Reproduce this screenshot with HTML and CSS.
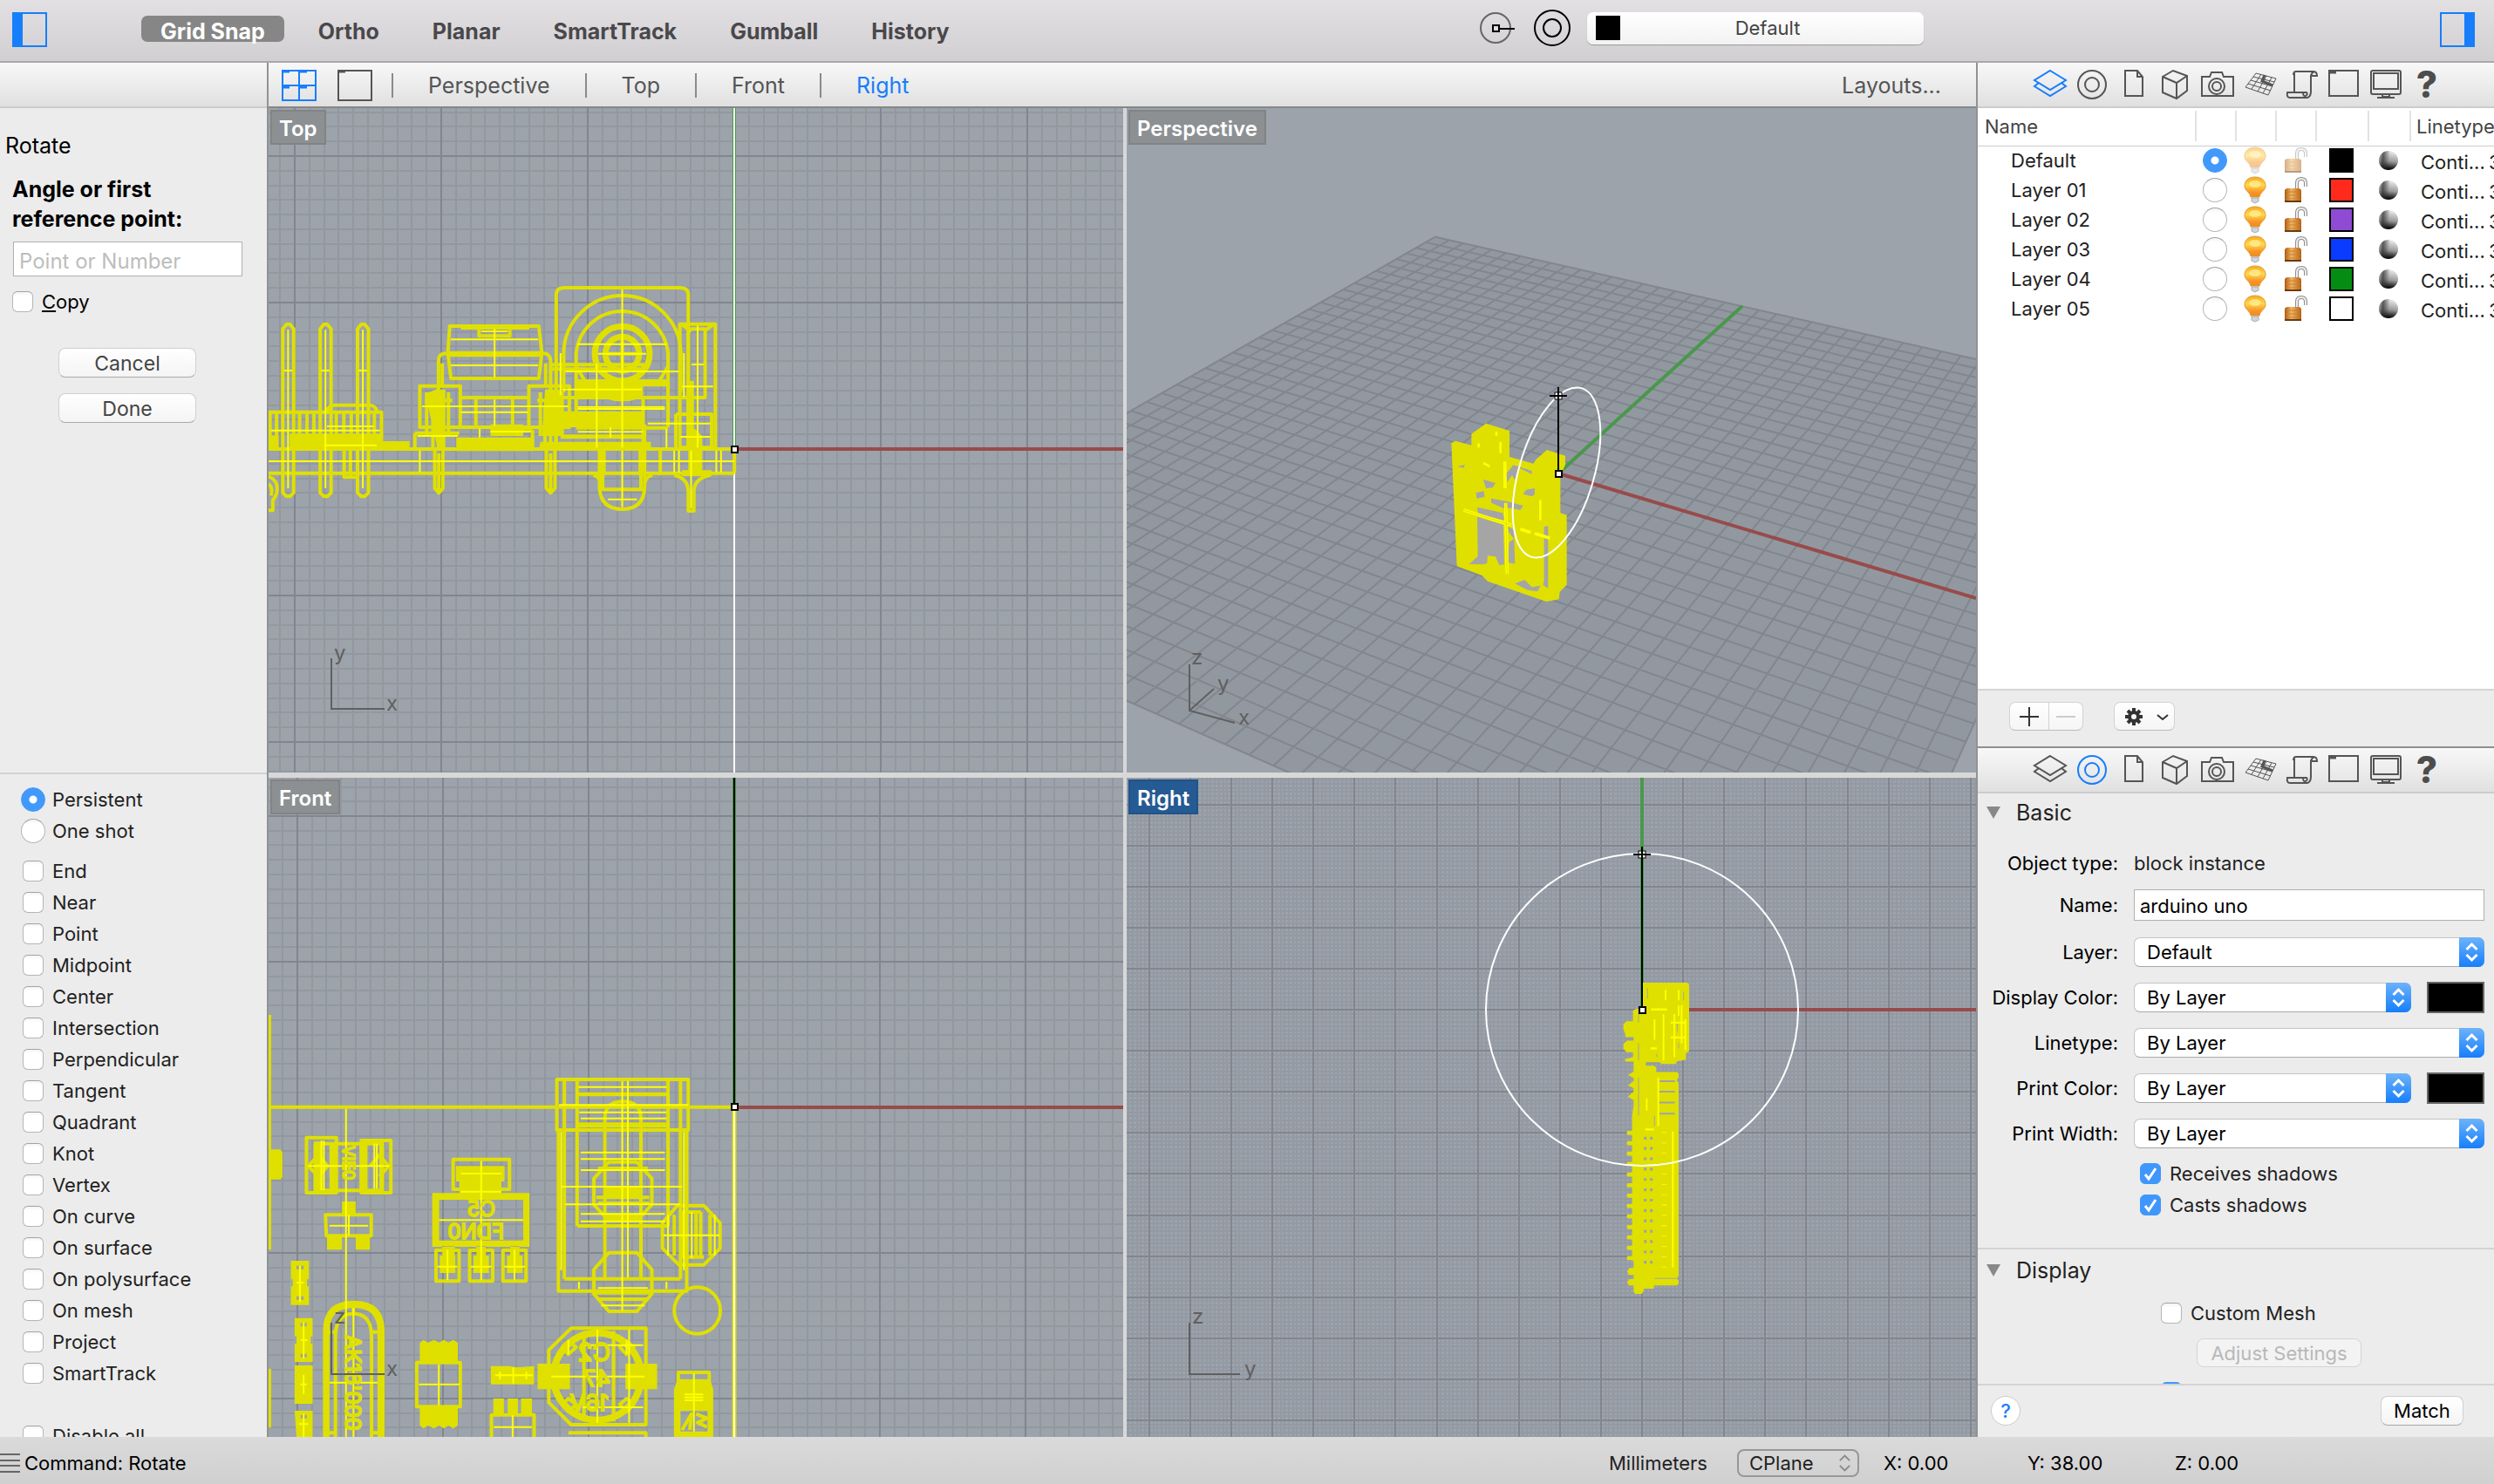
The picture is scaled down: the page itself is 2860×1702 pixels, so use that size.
FILE: index.html
```html
<!DOCTYPE html>
<html lang="en">
<head>
<meta charset="utf-8">
<title>Rotate</title>
<link rel="stylesheet" href="styles.css">
</head>
<body>
<svg class="defs" aria-hidden="true">
  <defs>
    <linearGradient id="bulbFill" x1="0" y1="0" x2="0" y2="1"><stop offset="0" stop-color="#f7a823"/><stop offset=".4" stop-color="#ffd84a"/><stop offset=".75" stop-color="#f8952a"/><stop offset="1" stop-color="#ee8a20"/></linearGradient>
    <linearGradient id="lockFill" x1="0" y1="0" x2="1" y2="0"><stop offset="0" stop-color="#a8550c"/><stop offset=".4" stop-color="#f2b566"/><stop offset="1" stop-color="#b4600f"/></linearGradient>
    <linearGradient id="ballFill" x1=".7" y1="0" x2=".55" y2="1"><stop offset="0" stop-color="#f0f0f0"/><stop offset=".55" stop-color="#9a9a9a"/><stop offset=".88" stop-color="#222"/><stop offset="1" stop-color="#000"/></linearGradient>
    <linearGradient id="ballEdge" x1="0" y1=".4" x2="1" y2=".5"><stop offset="0" stop-color="#aaa" stop-opacity=".7"/><stop offset=".2" stop-color="#333" stop-opacity=".75"/><stop offset=".55" stop-color="#333" stop-opacity="0"/></linearGradient>
  </defs>
  <symbol id="i-layers" viewBox="0 0 48 50"><path d="M24 9 42 20 24 31 6 20ZM11 23 6 27 24 38 42 27 37 23"/></symbol>
  <symbol id="i-torus" viewBox="0 0 48 50"><circle cx="24" cy="25" r="16"/><circle cx="24" cy="25" r="8"/></symbol>
  <symbol id="i-page" viewBox="0 0 48 50"><path d="M14 9H28L34 16V38H14ZM28 9V16H34"/></symbol>
  <symbol id="i-cube" viewBox="0 0 48 50"><path d="M9 16 21 9 37 15V32L25 41 9 34ZM9 16 25 23 37 15M25 23V41"/></symbol>
  <symbol id="i-camera" viewBox="0 0 48 50"><path d="M6 16H15L17 11H29L31 16H42V38H6Z"/><circle cx="23" cy="27" r="9"/><circle cx="23" cy="27" r="5"/></symbol>
  <symbol id="i-plane" viewBox="0 0 48 50"><path class="fine" d="M20 12 43 18 34 37 8 28ZM26 13 15 30M32 15 22 33M38 17 28 35M17 16 41 22M14 20 39 27M11 24 37 32"/><path class="bold" d="M30 14 27 21 39 26"/></symbol>
  <symbol id="i-script" viewBox="0 0 48 50"><path d="M16 11V34H8Q7 40 11 40H31Q35 39 35 33V15H42Q42 10 38 10H18Q15 10 15 14M35 15Q36 11 39 10M26 34H30Q32 36 29 38Q26 39 26 34ZM16 34H26"/></symbol>
  <symbol id="i-window" viewBox="0 0 48 50"><rect x="8" y="9" width="33" height="29"/><path class="bold" d="M9 11H16"/></symbol>
  <symbol id="i-monitor" viewBox="0 0 48 50"><rect x="8" y="9" width="34" height="27" rx="2"/><rect x="11" y="12" width="28" height="18"/><path d="M21 36V39H29V36M15 40H35"/></symbol>
  <symbol id="i-bulb" viewBox="0 0 28 32"><path d="M14 1C7 1 2 5 2 11C2 17 8 18 9 24H19C20 18 26 17 26 11C26 5 21 1 14 1Z" fill="url(#bulbFill)" stroke="#e39b2c"/><ellipse cx="14" cy="9" rx="7" ry="4" fill="#fff19a" opacity=".7"/><path d="M10 25H18V29L14 31 10 29Z" fill="#cfd6dd" stroke="#a5adb5"/></symbol>
  <symbol id="i-lock" viewBox="0 0 30 32"><path d="M17 15V8Q17 3 22 3Q27 3 27 8V12" fill="none" stroke="#8e8e8e" stroke-width="4"/><path d="M17 15V8Q17 3 22 3Q27 3 27 8V12" fill="none" stroke="#eee" stroke-width="2"/><path d="M3 17Q3 14 7 14H18Q22 14 22 17V29H3Z" fill="url(#lockFill)"/><path d="M4 18H21M4 22H21M4 26H21" stroke="#c9822e" stroke-width="1"/><path d="M3 29H22" stroke="#6b3b10" stroke-width="2"/></symbol>
  <symbol id="i-ball" viewBox="0 0 24 24"><circle cx="12" cy="12" r="11" fill="url(#ballFill)"/><circle cx="12" cy="12" r="11" fill="url(#ballEdge)"/></symbol>
  <symbol id="i-updown" viewBox="0 0 28 34"><path d="M8 14 14 8 20 14M8 20 14 26 20 20"/></symbol>
</svg>

<div class="app">
  <header class="titlebar">
    <button class="icon-btn" aria-label="Left sidebar"><svg width="40" height="40" viewBox="0 0 40 40"><path d="M1 1H39V39H1Z" fill="none" stroke="#167efb" stroke-width="2"/><path d="M1 1H12V39H1Z" fill="#167efb"/></svg></button>
    <nav class="modes">
      <button class="mode on">Grid Snap</button><button class="mode">Ortho</button><button class="mode">Planar</button><button class="mode">SmartTrack</button><button class="mode">Gumball</button><button class="mode">History</button>
    </nav>
    <div class="current">
      <button class="icon-btn" aria-label="Record history"><svg width="44" height="44" viewBox="0 0 44 44" fill="none"><circle cx="19" cy="22" r="17" stroke="#666" stroke-width="2"/><path d="M21 23H41" stroke="#000" stroke-width="2"/><rect x="16" y="19" width="7" height="7" fill="#ddd" stroke="#000" stroke-width="2"/></svg></button>
      <button class="icon-btn" aria-label="Object properties"><svg width="44" height="44" viewBox="0 0 44 44" fill="none" stroke="#000" stroke-width="2"><circle cx="22" cy="22" r="20"/><circle cx="22" cy="22" r="10"/></svg></button>
      <button class="layer-field"><span class="swatch black"></span><span class="layer-name">Default</span></button>
    </div>
    <button class="icon-btn right-toggle" aria-label="Right sidebar"><svg width="40" height="40" viewBox="0 0 40 40"><path d="M1 1H39V39H1Z" fill="none" stroke="#167efb" stroke-width="2"/><path d="M28 1H39V39H28Z" fill="#167efb"/></svg></button>
  </header>

  <aside class="left">
    <div class="strip"></div>
    <form class="command">
      <h2>Rotate</h2>
      <label class="prompt" for="pt">Angle or first reference point:</label>
      <input class="text" id="pt" type="text" placeholder="Point or Number">
      <label class="check copy"><input type="checkbox"><span><u>C</u>opy</span></label>
      <button type="button" class="push">Cancel</button>
      <button type="button" class="push">Done</button>
    </form>
    <form class="snaps">
      <label class="check"><input type="radio" name="persist" checked>Persistent</label>
      <label class="check gap-after"><input type="radio" name="persist">One shot</label>
      <label class="check"><input type="checkbox">End</label>
      <label class="check"><input type="checkbox">Near</label>
      <label class="check"><input type="checkbox">Point</label>
      <label class="check"><input type="checkbox">Midpoint</label>
      <label class="check"><input type="checkbox">Center</label>
      <label class="check"><input type="checkbox">Intersection</label>
      <label class="check"><input type="checkbox">Perpendicular</label>
      <label class="check"><input type="checkbox">Tangent</label>
      <label class="check"><input type="checkbox">Quadrant</label>
      <label class="check"><input type="checkbox">Knot</label>
      <label class="check"><input type="checkbox">Vertex</label>
      <label class="check"><input type="checkbox">On curve</label>
      <label class="check"><input type="checkbox">On surface</label>
      <label class="check"><input type="checkbox">On polysurface</label>
      <label class="check"><input type="checkbox">On mesh</label>
      <label class="check"><input type="checkbox">Project</label>
      <label class="check last"><input type="checkbox">SmartTrack</label>
      <label class="check"><input type="checkbox">Disable all</label>
    </form>
  </aside>

  <main class="center">
    <nav class="viewtabs">
      <button class="icon-btn" aria-label="Four viewports"><svg width="40" height="36" viewBox="0 0 40 36" fill="none" stroke="#167efb"><path d="M1 1H39V35H1ZM20 1V35M1 18H39" stroke-width="2"/><path d="M1 2H9M20 2H29M1 20H9M20 20H29" stroke-width="3"/></svg></button>
      <button class="icon-btn" aria-label="Single viewport"><svg width="40" height="36" viewBox="0 0 40 36" fill="none" stroke="#555"><path d="M1 1H39V35H1Z" stroke-width="2"/><path d="M1 2H9" stroke-width="3"/></svg></button>
      <ul>
        <li><a href="#persp">Perspective</a></li><li><a href="#top">Top</a></li><li><a href="#front">Front</a></li><li><a class="on" href="#right">Right</a></li>
      </ul>
      <a class="layouts" href="#layouts">Layouts...</a>
    </nav>
    <div class="views">
      <section class="view" id="top">
        <svg viewBox="308 124 980 762" preserveAspectRatio="xMinYMin slice">
          <g class="grid" id="gridTop"></g>
          <path class="ax-y" d="M842 124V515"/><path class="hot" d="M842 124V886"/><path class="ax-x" d="M842 515H1288"/>
          <g class="gizmo"><path d="M380 755V813H441"/><text x="383" y="757">y</text><text x="443" y="815">x</text></g>
          <g class="wire" transform="translate(300 300) scale(.357143 .333333)">
            <g class="t">
              <path d="M22 645H1518M22 728H1518M1518 645V728"/>
              <path d="M68 795V232L80 216H91L103 232V795L91 808H80ZM188 795V232L200 216H211L223 232V795L211 808H200ZM308 795V232L320 216H331L343 232V795L331 808H320Z"/>
              <path d="M22 518H385V640M27 518V645M48 518V600M122 518V600M146 518V600M168 518V600M240 518V600M264 518V600M288 518V600M362 518V600M210 515Q215 494 235 494H345Q365 494 370 515"/>
              <path d="M22 740Q50 750 50 780Q50 805 36 820V856H22M22 765Q38 780 30 805M265 650V742H305M285 650V742"/>
              <path d="M604 222H890L900 315 890 402H608L598 315ZM640 228H860M698 232V256H797V232"/>
              <path d="M568 640V340Q568 316 592 316H905Q925 316 928 340V640M580 430V350M912 430V350"/>
              <path d="M508 428H638V570H508ZM858 428H988V570H858ZM530 450V600M600 450V600M895 450V600M965 450V600M638 468H858M638 570H858M688 470V568M806 470V568M524 478H612M885 478H960M550 500V640M582 500V640M910 500V640M945 500V640"/>
              <path d="M492 590V640M870 580V640M492 590H635M735 575H870"/>
              <path d="M556 650V780L569 796 582 780V650M914 650V780L928 796 942 780V650M569 660V790M928 660V790"/>
              <path d="M946 640V115Q946 90 972 90H1343Q1370 90 1370 115V640"/>
              <path d="M970 450V317A188 200 0 0 1 1346 317V450M1010 405V317A148 159 0 0 1 1305 317V570M1010 360L1040 415M1305 360L1275 415M1010 405V570"/>
              <path d="M930 355H1225V370H930M946 468H1424V232H1370V640M1343 215H1457V640H1343ZM1347 215 1380 240M1453 215 1420 240M1330 525H1445V640M1330 525V640"/>
              <path d="M1010 572H1305M1225 470V640M1230 560V720M1085 645V780Q1090 852 1158 852Q1225 852 1230 780V645M1095 645V780M1218 645V780M1090 784H1225M1065 735Q1088 740 1088 770M1255 735Q1230 740 1230 770M1280 645V735M1325 735Q1368 745 1370 790V858H1388V790Q1390 745 1440 735"/>
            </g>
            <g class="f">
              <path d="M90 592H385V618H475V645H90ZM27 598H55V645H27ZM595 308H903V328H595ZM625 605H870V652H625ZM735 560H840V600H735ZM525 455L565 640H590V440H560ZM910 440H960V600H900ZM1010 405H1305V430H1225V465H1015ZM955 515H1225V570H955ZM895 620H1250V650H890ZM960 595H1225V610H960ZM1085 650H1105V735H1085ZM1210 650H1235V735H1210ZM1370 410H1388V650H1370ZM1385 570L1415 600V735H1370V650ZM1350 718H1445V738H1350Z"/>
              <path d="M1100 470H1215Q1158 492 1100 470Z"/>
            </g>
            <g class="t"><ellipse cx="1158" cy="317" rx="88" ry="94" stroke-width="7"/><ellipse cx="1158" cy="317" rx="54" ry="58" stroke-width="7"/><path d="M1158 260V372M1105 317H1210"/></g>
            <path class="n" d="M85 235V780M205 235V780M325 235V780M72 375H98M192 375H218M312 375H338M22 687H1518M30 581H380M210 567H360M200 632H370M608 268H888M608 357H888M748 232V398M705 240H790M515 498H985M640 518H855M748 475V565M500 600H630M735 585H865M1158 95V640M1015 284H1300M1080 317H1235M975 378H1340M965 440H1220M1015 500H1295M1015 507H1295M1076 350V640M960 315V460M1356 315V465M1400 220V640M1380 354H1420M1350 430H1450M1240 557H1440M1345 603H1440M1015 586H1225M1300 575V640M1158 650V845M1112 818H1205M508 650V725M1325 650V725M1340 650V725M1460 650V725M1475 650V725M1379 650V850M700 575V605M1120 570V605"/>
          </g>
          <rect class="pt" x="839" y="512" width="7" height="7"/>
        </svg>
        <span class="tag">Top</span>
      </section>

      <section class="view" id="persp">
        <svg viewBox="1292 124 974 762" preserveAspectRatio="xMinYMin slice">
          <path id="floor" fill="#9298a0"/><path id="gridPersp" fill="none" stroke="#82868e" stroke-width="2"/>
          <path class="ax-y" d="M1787 543 1998 351"/><path class="ax-x" d="M1787 543 2266 686"/>
          <g class="gizmo"><path d="M1364 762V815L1416 829M1364 815 1392 790"/><text x="1366" y="762">z</text><text x="1396" y="792">y</text><text x="1420" y="831">x</text></g>
          <g transform="translate(1600 400) scale(.333333)">
            <path class="f" d="M193 325 207 317 262 332V293L312 257 393 282V372L475 395 485 380 522 348 585 368V398L568 440V565L590 572V812L566 836 563 862 520 870 318 800 298 780 212 748Z"/>
            <path fill="#a5a5a5" d="M282 578 372 606 375 742 358 745 345 715 318 712 316 738 303 742 254 741 284 715ZM388 612 408 622 412 740 388 735 392 665 408 655 390 630ZM406 400 470 420V432L430 412 420 415 418 440 410 450 402 435 385 460 382 430ZM450 485 480 480V500L470 508 440 500ZM303 450 345 462 335 478 312 480ZM278 495 305 490 308 510 280 515ZM330 515 385 525 440 540 430 555 400 548 372 548 330 530ZM282 545 370 565 375 590 285 570ZM512 612 526 610V825L508 812 512 800ZM215 405 240 398 235 410ZM412 808 445 795 470 820 500 815 490 835 455 830Z"/>
            <path d="M235 555 400 607M430 620 466 632M480 635 532 652M377 388 378 480M380 530 385 775" stroke="#ff0" stroke-width="11" fill="none"/>
            <path d="M235 555 400 607M380 530 385 775" stroke="#d0d000" stroke-width="2" fill="none"/>
            <path d="M348 285V300M362 320V360M303 393 325 405M287 325V340M499 520V590" stroke="#ff0" stroke-width="8" fill="none"/>
          </g>
          <ellipse class="hot" cx="1785" cy="542" rx="101" ry="43" transform="rotate(-73.5 1785 542)"/>
          <path class="ink" d="M1787 543V444M1777 454H1797"/><rect class="pt" x="1784" y="540" width="7" height="7"/><rect class="cur" x="1783" y="450" width="8" height="8"/><path class="ink" d="M1787 444V464M1777 454H1797"/>
        </svg>
        <span class="tag">Perspective</span>
      </section>

      <section class="view" id="front">
        <svg viewBox="308 892 980 756" preserveAspectRatio="xMinYMin slice">
          <g class="grid" id="gridFront"></g>
          <path class="ax-y" d="M842 892V1270"/><path class="ink" d="M842 892V1270"/><path class="ax-x" d="M842 1270H1288"/>
          <path d="M842 1270V1648" stroke="#dfe000" stroke-width="5"/><path class="hot" d="M842 1270V1648"/>
          <g class="wire" transform="translate(300 1160) scale(.357143 .333333)">
            <g class="t">
              <path d="M22 329H1518M25 12V820M25 1230V1432"/>
              <path d="M144 434H240V624H144ZM320 444H415V624H320ZM172 455H388V616H172ZM205 700H352V772H208ZM615 509H796V612H615ZM948 234H1370V408H948ZM972 234V920M1013 234V738M1305 234V738M1345 234V920M953 408V962H1365V408M972 920H1345M1013 738H1305M1102 370V915M1218 370V915"/>
              <path d="M1115 518H1205L1253 575V665L1205 720H1115L1067 665V575ZM1115 830H1205L1253 888V972L1205 1032H1115L1067 972V888ZM1335 668H1420L1472 728V815L1420 872H1340L1287 815V728ZM1102 370Q1102 310 1160 310Q1218 310 1218 370"/>
              <path d="M1080 540H1240M1075 640H1245M1080 660H1245M1080 990H1240M1070 968H1250M1350 690H1410M1345 845H1420M1325 700V840M1350 690V850M1410 690V850M1440 700V840M1365 690V850M1395 690V850"/>
              <ellipse cx="1399" cy="1029" rx="74" ry="80"/>
              <path d="M560 822H634V928H560ZM668 822H742V928H668ZM775 822H849V928H775Z"/>
              <path d="M498 1208H638V1360H498ZM738 1388H875V1470H738ZM994 1090H1234V1422H994L922 1345V1165ZM985 1450H1234V1470M1338 1242H1437V1300H1338ZM1130 1100V1410M1035 1100V1410"/>
              <path d="M237 1464V1120Q237 1040 295 1040Q353 1040 353 1120V1464M210 1450H240M353 1450H390M295 1000V1040M215 1103H237M353 1103H390"/>
            </g>
            <path class="f" fill-rule="evenodd" d="M22 475H60L67 485V570L60 578H22ZM168 448H195V616H168ZM218 455H243V616H218ZM315 455H340V616H315ZM378 450H392V620H378ZM258 654H302V700H258ZM210 772H258V820H210ZM302 772H348V820H302ZM548 625H860V810H548ZM570 648V788H840V648ZM624 532H780V585H770V625H635V585H624ZM572 840H622V900H572ZM680 840H730V900H680ZM788 840H838V900H788ZM600 808H620V840H580V808ZM690 808H720V840H690ZM798 808H828V840H798ZM94 858H152V1010H94ZM106 1055H164V1206H106ZM106 1218H164V1350H106ZM106 1374H164V1464H112ZM197 1464V1100Q197 995 296 995Q395 995 395 1100V1464H372V1100Q372 1020 296 1020Q218 1020 218 1100V1464ZM508 1140L520 1130 535 1140 553 1130 570 1140 585 1130 600 1140 615 1130 630 1140V1205H508ZM508 1362H630V1425L615 1435 600 1425 585 1435 570 1425 553 1435 535 1425 520 1435 508 1425ZM736 1220H792L820 1225 875 1220V1283H736ZM744 1332H778V1385H744ZM790 1332H823V1385H790ZM833 1332H868V1385H833ZM886 1212H990V1300H886ZM1168 1212H1270V1300H1168ZM1324 1300L1336 1265H1440L1450 1300V1470H1324ZM1345 1375V1445H1432V1375ZM1013 278H1305V292H1013ZM1013 382H1305V400H1013ZM1102 600H1218V640H1102ZM1105 695H1215V722H1105Z"/>
            <g class="t"><ellipse cx="1078" cy="1256" rx="140" ry="150" stroke-width="8"/><path d="M150 532L182 495 212 532 182 568ZM348 532L378 495 408 532 378 568M965 1155L985 1135 1010 1155 985 1180ZM1150 1155L1172 1135 1195 1155 1172 1180ZM965 1352L985 1332 1010 1352 985 1378ZM1150 1352L1172 1332 1195 1352 1172 1378ZM1350 1440L1380 1385 1375 1440M1395 1385 1430 1400 1400 1415 1430 1430"/></g>
            <path class="n" d="M271 335V1464M150 532H410M192 445V615M200 445V615M362 455V610M370 455V610M218 737H342M280 700V770M705 515V925M570 718H840M640 558H770M640 620H770M597 820V925M812 820V925M565 878H628M672 878H738M780 878H845M1158 240V1030M1176 240V915M1017 260H1300M955 322H1370M1020 347H1300M1025 368H1300M1025 485H1295M1025 508H1295M1025 546H1295M965 603H1350M975 664H1345M1025 697H1295M1025 722H1295M962 415V890M1356 415V890M1290 770H1470M1381 690V850M1305 700V840M1455 700V840M1080 952H1240M1090 1012H1230M1019 930V955M1300 930V955M569 1215V1355M505 1283H635M745 1430H868M806 1390V1464M930 1256H1230M1078 1095V1415M1180 1095V1415M1030 1148H1225M1030 1362H1225M985 1130V1180M1172 1130V1180M1388 1245V1445M1358 1318H1418M1358 1328H1418M1358 1338H1418M295 1020V1464M218 1277H372M750 1252H870M808 1225V1280M765 1240V1265M850 1240V1265M135 1250V1316M125 1283H145M112 933H135M123 875V1000M125 1131H147M135 1070V1195M120 1420H150M135 1385V1464"/>
            <path class="hole" d="M112 875H120V887H112ZM127 875H135V887H127ZM112 980H120V992H112ZM127 980H135V992H127ZM94 922H100V946H94ZM146 922H152V946H146ZM106 1118H112V1144H106ZM158 1118H164V1144H158ZM125 1072H132V1084H125ZM138 1072H145V1084H138ZM125 1178H132V1190H125ZM138 1178H145V1190H138ZM125 1388H132V1400H125ZM138 1388H145V1400H138ZM1345 1250H1380V1262H1345ZM1395 1250H1432V1262H1395Z"/>
          </g>
          <g class="etch">
            <text transform="translate(568 1395) scale(-1 1)" font-size="24">C5</text><text transform="translate(578 1421) scale(-1 1)" font-size="24">FDN0</text>
            <text transform="translate(700 1561) scale(-1 1)" font-size="28">C2</text><text transform="translate(700 1590) scale(-1 1)" font-size="26">47</text><text transform="translate(698 1618) scale(-1 1)" font-size="26">16V</text>
            <text transform="translate(396 1531) rotate(90)" font-size="24">AK16'000</text><text transform="translate(393 1314) rotate(90)" font-size="18">VIE0</text>
          </g>
          <g class="gizmo"><path d="M380 1517V1576H441"/><text x="383" y="1518">z</text><text x="443" y="1578">x</text></g>
          <rect class="pt" x="839" y="1266" width="7" height="7"/>
        </svg>
        <span class="tag">Front</span>
      </section>

      <section class="view" id="right">
        <svg viewBox="1292 892 974 756" preserveAspectRatio="xMinYMin slice">
          <g class="grid" id="gridRight"></g>
          <path class="ax-y" d="M1883 892V1158"/><path class="ax-x" d="M1883 1158H2266"/>
          <g class="gizmo"><path d="M1364 1517V1576H1422"/><text x="1367" y="1518">z</text><text x="1427" y="1578">y</text></g>
          <g transform="translate(1680 900) scale(.333333 .395413)">
            <path class="f" d="M612 574H765L771 580V772L760 780V798L730 802 725 810H675L670 805H622V815H650L658 820V833H730L735 838V850L728 858 735 864V1425L728 1432 735 1438V1446L730 1452H650V1462H615V1468L608 1477H585L580 1470V1452H563L558 1442 565 1434H580V1422H563L558 1412 565 1402H580V1380H575V960L580 930V915L560 905 580 890V880L560 872 580 860V850L560 842 580 832V803H552L550 796 578 790V776H555L545 765V752L558 742H580V732H552L550 720 545 710V695L555 686H578V655L590 650H612Z"/>
            <path d="M562 1010H578M562 1040H578M562 1070H578M562 1100H578M562 1131H578M562 1162H578M562 1192H578M562 1222H578M562 1252H578M562 1283H578M562 1313H578M562 1343H578M562 1373H578" stroke="#dfe000" stroke-width="12" stroke-linecap="round"/>
            <path d="M620 1021V1400M641 1021V1400" stroke="#9ca3ab" stroke-width="9" stroke-dasharray="8 22"/>
            <path d="M670 860H722M665 890H722M665 922H722M668 954H722" stroke="#9ca3ab" stroke-width="5"/>
            <path d="M752 600V625M730 690V715M735 750V765M660 780V790M628 590V620M652 960V990M652 1432H728M597 650V690M597 750V800M597 850V960" stroke="#a5a89a" stroke-width="3"/>
            <path d="M715 1005V1400M683 665V800M720 665V790M758 680V770M690 595V625M735 595V625M640 652H695M708 690H760M708 733H755M735 640V670M745 640V750M652 680V740M638 765H660M665 850V990M620 1000H650M625 910V945" fill="none" stroke="#ff0" stroke-width="6"/>
            <path d="M685 1008V1400" stroke="#ff0" stroke-width="18" stroke-dasharray="2 28"/>
          </g>
          <circle class="hot" cx="1883" cy="1158" r="179"/>
          <path class="ink" d="M1883 1158V971"/><rect class="pt" x="1880" y="1155" width="7" height="7"/><rect class="cur" x="1879" y="976" width="8" height="8"/><path class="ink" d="M1883 971V990M1873 980H1893"/>
        </svg>
        <span class="tag active">Right</span>
      </section>
    </div>
  </main>

  <aside class="right">
    <section class="layers">
      <nav class="paneltabs">
        <button class="on" aria-label="Layers"><svg><use href="#i-layers"/></svg></button><button aria-label="Properties"><svg><use href="#i-torus"/></svg></button><button aria-label="Notes"><svg><use href="#i-page"/></svg></button><button aria-label="Blocks"><svg><use href="#i-cube"/></svg></button><button aria-label="Views"><svg><use href="#i-camera"/></svg></button><button aria-label="Planes"><svg><use href="#i-plane"/></svg></button><button aria-label="Script"><svg><use href="#i-script"/></svg></button><button aria-label="Viewport"><svg><use href="#i-window"/></svg></button><button aria-label="Display"><svg><use href="#i-monitor"/></svg></button><button class="q" aria-label="Help">?</button>
      </nav>
      <div class="table-wrap">
        <table>
          <colgroup><col class="c-name"><col class="c-s"><col class="c-s"><col class="c-s"><col class="c-color"><col class="c-ball"><col class="c-line"><col class="c-rest"></colgroup>
          <thead><tr><th>Name</th><th></th><th></th><th></th><th></th><th></th><th class="lt" colspan="2">Linetype</th></tr></thead>
          <tbody>
            <tr class="cur-layer"><td>Default</td><td><input type="radio" name="layer" aria-label="Default" checked></td><td><svg class="bulb"><use href="#i-bulb"/></svg></td><td><svg class="lock"><use href="#i-lock"/></svg></td><td><span class="swatch black"></span></td><td><svg class="ball"><use href="#i-ball"/></svg></td><td>Conti...</td><td>3</td></tr>
            <tr><td>Layer 01</td><td><input type="radio" name="layer" aria-label="Layer 01"></td><td><svg class="bulb"><use href="#i-bulb"/></svg></td><td><svg class="lock"><use href="#i-lock"/></svg></td><td><span class="swatch red"></span></td><td><svg class="ball"><use href="#i-ball"/></svg></td><td>Conti...</td><td>3</td></tr>
            <tr><td>Layer 02</td><td><input type="radio" name="layer" aria-label="Layer 02"></td><td><svg class="bulb"><use href="#i-bulb"/></svg></td><td><svg class="lock"><use href="#i-lock"/></svg></td><td><span class="swatch purple"></span></td><td><svg class="ball"><use href="#i-ball"/></svg></td><td>Conti...</td><td>3</td></tr>
            <tr><td>Layer 03</td><td><input type="radio" name="layer" aria-label="Layer 03"></td><td><svg class="bulb"><use href="#i-bulb"/></svg></td><td><svg class="lock"><use href="#i-lock"/></svg></td><td><span class="swatch blue"></span></td><td><svg class="ball"><use href="#i-ball"/></svg></td><td>Conti...</td><td>3</td></tr>
            <tr><td>Layer 04</td><td><input type="radio" name="layer" aria-label="Layer 04"></td><td><svg class="bulb"><use href="#i-bulb"/></svg></td><td><svg class="lock"><use href="#i-lock"/></svg></td><td><span class="swatch green"></span></td><td><svg class="ball"><use href="#i-ball"/></svg></td><td>Conti...</td><td>3</td></tr>
            <tr><td>Layer 05</td><td><input type="radio" name="layer" aria-label="Layer 05"></td><td><svg class="bulb"><use href="#i-bulb"/></svg></td><td><svg class="lock"><use href="#i-lock"/></svg></td><td><span class="swatch white"></span></td><td><svg class="ball"><use href="#i-ball"/></svg></td><td>Conti...</td><td>3</td></tr>
          </tbody>
        </table>
      </div>
      <div class="layer-tools">
        <div class="seg"><button aria-label="Add layer"><svg width="24" height="24" viewBox="0 0 24 24" stroke="#333" stroke-width="2"><path d="M12 1V23M1 12H23"/></svg></button><button aria-label="Remove layer" disabled><svg width="24" height="24" viewBox="0 0 24 24" stroke="#ccc" stroke-width="2"><path d="M1 12H23"/></svg></button></div>
        <button class="gear" aria-label="Layer actions"><svg width="52" height="24" viewBox="0 0 52 24" fill="none" stroke="#333"><circle cx="12" cy="12" r="5" stroke-width="4"/><path d="M12 2V6M12 18V22M2 12H6M18 12H22M5 5 8 8M16 16 19 19M5 19 8 16M16 8 19 5" stroke-width="4"/><path d="M39 10 45 15 51 10" stroke-width="2"/></svg></button>
      </div>
    </section>

    <section class="inspector">
      <nav class="paneltabs">
        <button aria-label="Layers"><svg><use href="#i-layers"/></svg></button><button class="on" aria-label="Properties"><svg><use href="#i-torus"/></svg></button><button aria-label="Notes"><svg><use href="#i-page"/></svg></button><button aria-label="Blocks"><svg><use href="#i-cube"/></svg></button><button aria-label="Views"><svg><use href="#i-camera"/></svg></button><button aria-label="Planes"><svg><use href="#i-plane"/></svg></button><button aria-label="Script"><svg><use href="#i-script"/></svg></button><button aria-label="Viewport"><svg><use href="#i-window"/></svg></button><button aria-label="Display"><svg><use href="#i-monitor"/></svg></button><button class="q" aria-label="Help">?</button>
      </nav>
      <form class="scroll">
        <h3><span class="tri"></span>Basic</h3>
        <div class="row"><span class="lab">Object type:</span><output>block instance</output></div>
        <div class="row tall"><label class="lab" for="nm">Name:</label><input class="text" id="nm" type="text" value="arduino uno"></div>
        <div class="row mid"><label class="lab" for="ly">Layer:</label><span class="pop"><select id="ly"><option>Default</option></select><svg><use href="#i-updown"/></svg></span></div>
        <div class="row mid"><label class="lab" for="dc">Display Color:</label><span class="pop"><select id="dc"><option>By Layer</option></select><svg><use href="#i-updown"/></svg></span><button type="button" class="well" aria-label="Display color swatch"></button></div>
        <div class="row mid"><label class="lab" for="lt">Linetype:</label><span class="pop"><select id="lt"><option>By Layer</option></select><svg><use href="#i-updown"/></svg></span></div>
        <div class="row mid"><label class="lab" for="pc">Print Color:</label><span class="pop"><select id="pc"><option>By Layer</option></select><svg><use href="#i-updown"/></svg></span><button type="button" class="well" aria-label="Print color swatch"></button></div>
        <div class="row mid"><label class="lab" for="pw">Print Width:</label><span class="pop"><select id="pw"><option>By Layer</option></select><svg><use href="#i-updown"/></svg></span></div>
        <div class="shadows">
          <label class="check"><span class="tick"><input type="checkbox" checked><svg viewBox="0 0 24 24"><path d="M6 13 10 18 18 6"/></svg></span>Receives shadows</label>
          <label class="check"><span class="tick"><input type="checkbox" checked><svg viewBox="0 0 24 24"><path d="M6 13 10 18 18 6"/></svg></span>Casts shadows</label>
        </div>
        <h3 class="ruled"><span class="tri"></span>Display</h3>
        <div class="mesh">
          <label class="check"><input type="checkbox">Custom Mesh</label>
          <button type="button" class="push adjust" disabled>Adjust Settings</button>
          <input type="checkbox" aria-label="Show isocurves" checked>
        </div>
      </form>
      <footer class="match"><button class="help" aria-label="Help">?</button><button class="push">Match</button></footer>
    </section>
  </aside>

  <footer class="status">
    <svg width="23" height="24" viewBox="0 0 23 24" stroke="#666" stroke-width="2"><path d="M0 2H23M0 9H23M0 15H23M0 22H23"/></svg>
    <span class="cmd">Command: Rotate</span>
    <span class="units">Millimeters</span>
    <span class="cplane"><select aria-label="Construction plane"><option>CPlane</option></select><svg><use href="#i-updown"/></svg></span>
    <span class="xyz">X: 0.00</span><span class="xyz y">Y: 38.00</span><span class="xyz z">Z: 0.00</span>
  </footer>
</div>
<script src="grid.js"></script>
</body>
</html>
```
FILE: styles.css
```css
* { box-sizing: border-box; }
html, body { height: 100%; margin: 0; }
body { font-family: Inter, "Liberation Sans", sans-serif; font-size: 22px; line-height: 28px; color: #222; background: #ececec; overflow: hidden; }
button, input, select { font: inherit; color: inherit; margin: 0; }
button { border: 0; background: none; padding: 0; }
a { color: inherit; text-decoration: none; }
.defs { position: absolute; width: 0; height: 0; }
svg { display: block; }

.app { height: 100%; display: grid; grid-template: 72px minmax(0, 1fr) 54px / 308px minmax(0, 1fr) 594px; }

.titlebar { grid-column: 1 / -1; display: flex; align-items: center; padding: 0 22px 2px 14px; background: linear-gradient(#e2e0e3, #d1cfd2); border-bottom: 2px solid #a9a8aa; }
.modes { display: flex; gap: 17px; margin-left: 108px; padding-bottom: 2px; }
.mode { height: 30px; padding: 6px 22px 0; border-radius: 7px; font-size: 25px; line-height: 24px; font-weight: 650; color: #4a484b; }
.mode.on { background: #868686; color: #fff; }
.current { display: flex; align-items: center; gap: 18px; margin-left: auto; margin-right: 592px; padding-bottom: 4px; }
.layer-field { display: flex; align-items: center; width: 386px; height: 37px; padding: 0 10px; border-radius: 7px; background: linear-gradient(#fff, #f2f2f2); box-shadow: 0 1px 1px #9a9a9a; color: #444; }
.layer-name { flex: 1; text-align: center; }
.swatch { display: block; width: 28px; height: 28px; border: 2px solid #000; }
.black { background: #000; } .red { background: #ff2a1b; } .purple { background: #8f4bd3; } .blue { background: #0a3cff; } .green { background: #058d13; } .white { background: #fff; }

.left { display: grid; grid-template-rows: 52px 764fr 760fr; border-right: 2px solid #929292; min-height: 0; }
.strip, .viewtabs, .paneltabs { background: linear-gradient(#f8f8f8, #e0e0e0); border-bottom: 2px solid #ccc; }
.command { display: flex; flex-direction: column; align-items: flex-start; padding: 28px 28px 0 15px; min-height: 0; border-bottom: 2px solid #d2d2d2; color: #000; }
.command h2 { font-size: 25px; font-weight: 400; line-height: 30px; margin: 0 0 18px -9px; }
.prompt { font-size: 25px; line-height: 34px; font-weight: 700; margin: 0 0 9px -1px; }
.text { width: 100%; border: 1px solid #b0b0b0; background: #fff; outline: 0; border-radius: 0; padding: 4px 6px 0; }
.command .text { height: 40px; font-size: 24px; }
::placeholder { color: #bdbdbd; opacity: 1; }
.check { display: flex; align-items: center; height: 36px; gap: 10px; color: #222; }
.copy { margin: 11px 0 35px -1px; color: #000; }
input[type=checkbox], input[type=radio] { appearance: none; display: block; width: 24px; height: 24px; border: 1px solid #b5b5b5; border-top-color: #a2a2a2; border-radius: 6px; background: linear-gradient(#f4f4f4, #fff 20%); flex: none; }
input[type=radio] { width: 28px; height: 28px; border-radius: 50%; }
input[type=checkbox]:checked { background: #3f97fb; border-color: #3f97fb; }
input[type=radio]:checked { border-color: #4199fb; background: radial-gradient(circle, #fff 4px, #4199fb 5px); }
.push { height: 34px; min-width: 95px; padding: 0; border-radius: 8px; background: linear-gradient(#fff, #f4f4f4); border: 1px solid #d0d0d0; border-bottom-color: #aaa; }
.command .push { width: 158px; font-size: 23px; color: #444; margin: 0 0 18px 52px; padding-top: 2px; }
.snaps { display: flex; flex-direction: column; padding: 11px 0 0 26px; overflow: hidden; min-height: 0; }
.snaps .check { flex: none; }
.snaps input[type=radio] { margin: 0 -2px; }
.snaps .gap-after { margin-bottom: 10px; }
.snaps .last { margin-bottom: 36px; }

.center { display: flex; flex-direction: column; min-width: 0; min-height: 0; }
.viewtabs { flex: none; height: 52px; display: flex; align-items: center; gap: 24px; padding: 1px 40px 0 15px; border-color: #858785; font-size: 25px; color: #555; }
.viewtabs ul { display: flex; margin: 0 0 0 -2px; padding: 0; list-style: none; }
.viewtabs li { border-left: 2px solid #8a8a8a; padding: 0 40px; line-height: 28px; }
.viewtabs .on { color: #167efb; }
.layouts { margin-left: auto; }
.views { flex: 1; min-height: 0; display: grid; grid-template: minmax(0, 762fr) minmax(0, 756fr) / minmax(0, 980fr) minmax(0, 974fr); gap: 6px 4px; background: #d8d8d8; }
.view { position: relative; overflow: hidden; background: #9ca3ab; }
.view > svg { width: 100%; height: 100%; }
.tag { position: absolute; left: 2px; top: 2px; height: 40px; padding: 0 8px; border: 2px solid #818385; background: #8d9093; color: #fff; font-size: 24px; font-weight: 600; line-height: 40px; }
.tag.active { background: #255a92; border-color: #20538a; }

.grid, .wire { fill: none; }
.minor { stroke: #93989f; stroke-width: 2; }
.minor.dense { stroke: #939aa3; }
.major { stroke: #82868e; stroke-width: 2; }
.ax-x { stroke: #984b4b; stroke-width: 4; fill: none; }
.ax-y { stroke: #4a984b; stroke-width: 4; fill: none; }
.hot { stroke: #fff; stroke-width: 2; fill: none; }
.ink { stroke: #000; stroke-width: 2; fill: none; }
.pt { fill: #fff; stroke: #000; stroke-width: 2; }
.cur { fill: #fff; stroke: #000; stroke-width: 1; }
.gizmo path { fill: none; stroke: #606060; stroke-width: 2; }
.gizmo text { fill: #606060; font-size: 24px; }
.wire path, .wire ellipse { vector-effect: non-scaling-stroke; }
.t { stroke: #dfe000; stroke-width: 4; stroke-linejoin: round; fill: none; }
.f { fill: #dfe000; }
.n { stroke: #ff0; stroke-width: 2; fill: none; }
.hole { fill: #9ca3ab; }
.etch { fill: #dfe000; stroke: #dfe000; stroke-width: 2; }

.right { display: grid; grid-template-rows: minmax(0, 786fr) minmax(0, 790fr); border-left: 2px solid #929292; min-height: 0; min-width: 0; }
.layers, .inspector { display: flex; flex-direction: column; min-height: 0; min-width: 0; }
.paneltabs { flex: none; display: flex; justify-content: flex-end; padding-right: 53px; height: 52px; }
.paneltabs button { width: 48px; height: 50px; }
.paneltabs svg { width: 48px; height: 50px; fill: none; stroke: #555; stroke-width: 2; }
.paneltabs .on svg { stroke: #167efb; }
.paneltabs .q { font-size: 42px; font-weight: 800; color: #4d4d4d; }
.fine { stroke-width: 1; }
.bold { stroke-width: 3; }
.table-wrap { flex: 1; min-height: 0; overflow: hidden; background: #fff; }
table { table-layout: fixed; width: 100%; border-collapse: collapse; }
.c-name { width: 249px; } .c-s { width: 46px; } .c-color { width: 60px; } .c-ball { width: 48px; } .c-line { width: 91px; }
th { height: 43px; text-align: left; font-weight: 400; padding: 0 0 0 8px; color: #444; border-bottom: 1px solid #ccc; background: linear-gradient(#e2e2e2, #e2e2e2) 0 3px / 2px 35px no-repeat; white-space: nowrap; overflow: hidden; }
th:first-child { background: none; }
td { height: 34px; padding: 0; white-space: nowrap; overflow: hidden; }
td > * { margin: 0 auto !important; }
td:first-child { padding-left: 38px; }
td:nth-child(7) { padding: 3px 0 0 13px; }
td:nth-child(8) { padding: 3px 0 0; }
.bulb { width: 28px; height: 32px; } .lock { width: 30px; height: 32px; } .ball { width: 24px; height: 24px; }
.cur-layer .bulb, .cur-layer .lock { opacity: .5; }
.layer-tools { flex: none; height: 68px; display: flex; gap: 35px; align-items: flex-start; padding: 13px 36px; border-top: 2px solid #d5d5d5; border-bottom: 2px solid #8e8e8e; }
.seg, .gear { display: flex; height: 33px; border-radius: 7px; background: linear-gradient(#fff, #f5f5f5); border: 1px solid #d3d3d3; border-bottom-color: #bbb; }
.seg button { display: grid; place-items: center; width: 44px; }
.seg button + button { width: 39px; border-left: 1px solid #d3d3d3; }
.gear { width: 70px; align-items: center; padding-left: 10px; }

.scroll { flex: 1; min-height: 0; overflow: hidden; display: flex; flex-direction: column; }
.scroll > * { flex: none; }
h3 { display: flex; align-items: center; gap: 18px; margin: 0 0 17px; height: 43px; padding-left: 10px; font-size: 25px; font-weight: 400; }
.ruled { border-top: 2px solid #d3d3d3; height: 50px; margin: 31px 0 7px; }
.tri { border: 8px solid transparent; border-top: 14px solid #888; border-bottom: 0; }
.row { display: flex; align-items: center; height: 40px; gap: 18px; padding-right: 11px; color: #000; }
.lab { width: 161px; text-align: right; flex: none; white-space: nowrap; }
.row output { color: #222; }
.tall { height: 56px; }
.mid { height: 52px; }
.row .text { flex: 1; min-width: 0; height: 36px; padding-top: 2px; }
.pop { flex: 1; position: relative; height: 34px; }
.pop select { appearance: none; width: 100%; height: 34px; border: 1px solid #c4c4c4; border-bottom-color: #a8a8a8; border-radius: 7px; background: #fff; padding: 0 40px 0 14px; }
.pop svg, .cplane svg { position: absolute; right: 0; top: 0; width: 29px; height: 34px; pointer-events: none; fill: none; stroke: #fff; stroke-width: 3; background: linear-gradient(#6db3fa, #167efb); border-radius: 0 7px 7px 0; }
.well { width: 66px; height: 36px; background: #000; border: 2px solid #666; }
.shadows { padding: 2px 0 0 186px; }
.tick { position: relative; }
.tick svg { position: absolute; inset: 0; width: 24px; height: 24px; fill: none; stroke: #fff; stroke-width: 3; pointer-events: none; }
.mesh { padding-left: 210px; }
.adjust { display: block; width: 189px; height: 33px; margin: 11px 0 17px 41px; color: #b8b8b8; background: #f3f3f3; border-color: #d4d4d4; }
.match { flex: none; height: 61px; border-top: 2px solid #d3d3d3; display: flex; justify-content: space-between; align-items: center; padding: 0 35px 2px 15px; color: #000; }
.help { width: 34px; height: 34px; border-radius: 50%; background: #fff; border: 1px solid #ccc; color: #167efb; font-weight: 500; }

.status { grid-column: 1 / -1; display: flex; align-items: center; padding-top: 5px; background: linear-gradient(#dadada, #d0d0d0); color: #000; }
.cmd { margin-left: 5px; }
.units { margin-left: auto; margin-right: 34px; color: #222; }
.cplane { position: relative; width: 140px; height: 32px; margin-right: 28px; }
.cplane select { appearance: none; width: 100%; height: 32px; border: 2px solid #979797; border-radius: 8px; background: none; padding: 0 12px; color: #222; }
.cplane svg { right: 2px; height: 32px; background: none; stroke: #8a8a8a; stroke-width: 2; }
.xyz { width: 165px; }
.xyz.y { width: 169px; }
.xyz.z { width: 366px; }
```
FILE: grid.js
```js
// Rules an orthographic construction plane: a line per step, with a stronger one on every tenth.
function ruleOrtho(id, box, ox, oy, step) {
  const [x0, y0, x1, y1] = box;
  let minor = '', major = '';
  for (let i = Math.ceil((x0 - ox) / step); ox + i * step <= x1; i++) {
    const s = `M${Math.round(ox + i * step)} ${y0}V${y1}`;
    if (i % 10) minor += s; else major += s;
  }
  for (let i = Math.ceil((y0 - oy) / step); oy + i * step <= y1; i++) {
    const s = `M${x0} ${Math.round(oy + i * step)}H${x1}`;
    if (i % 10) minor += s; else major += s;
  }
  document.getElementById(id).innerHTML =
    `<path class="minor${step < 8 ? ' dense' : ''}" d="${minor}"/><path class="major" d="${major}"/>`;
}
ruleOrtho('gridTop', [308, 124, 1288, 886], 842, 515, 16.8);
ruleOrtho('gridFront', [308, 892, 1288, 1648], 842, 1270, 16.7);
ruleOrtho('gridRight', [1292, 892, 2266, 1648], 1883, 1158, 4.71);

// Camera projection of the ground plane, with u and v running from -1 to 1.
function project(u, v) {
  const w = 1 - 0.1386 * u + 0.2547 * v;
  return `${((213 * u + 719.3 * v + 1787) / w).toFixed(1)} ${((62.2 * u - 102.3 * v + 543) / w).toFixed(1)}`;
}
const CELLS = 20;
let lines = '';
for (let i = -CELLS; i <= CELLS; i++) {
  const k = i / CELLS;
  lines += `M${project(k, -1)}L${project(k, 1)}M${project(-1, k)}L${project(1, k)}`;
}
document.getElementById('gridPersp').setAttribute('d', lines);
document.getElementById('floor').setAttribute('d',
  `M${project(-1, -1)}L${project(1, -1)}L${project(1, 1)}L${project(-1, 1)}Z`);
```
